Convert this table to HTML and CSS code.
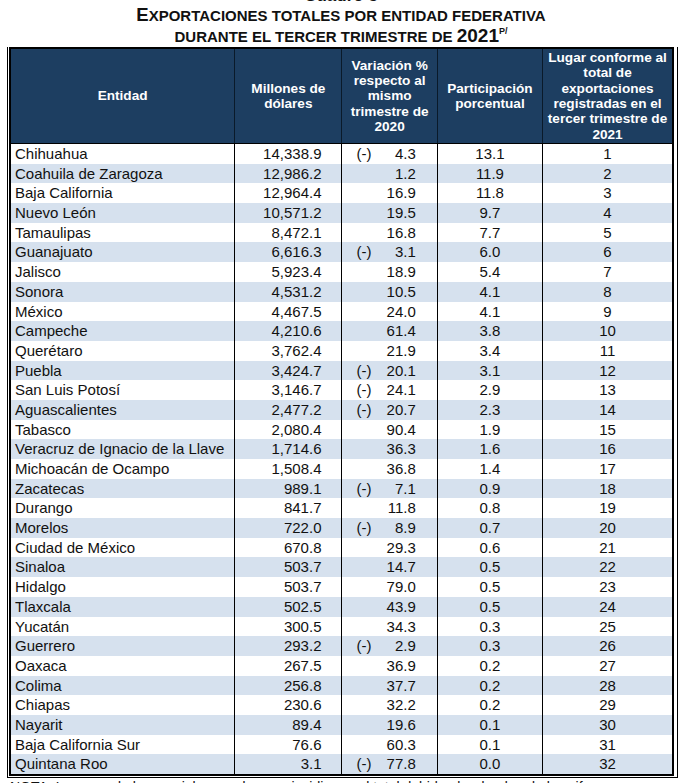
FILE: index.html
```html
<!DOCTYPE html>
<html lang="es">
<head>
<meta charset="utf-8">
<link rel="stylesheet" href="styles.css">
</head>
<body>
<div class="titles">
  <div class="t0">Cuadro 5</div>
  <div class="t1"><span class="big">E</span>XPORTACIONES TOTALES POR ENTIDAD FEDERATIVA</div>
  <div class="t2">DURANTE EL TERCER TRIMESTRE DE <span class="yr">2021</span><sup>P/</sup></div>
</div>
<div class="frame">
<table class="tbl">
  <colgroup>
    <col class="c1"><col class="c2"><col class="c3"><col class="c4"><col class="c5">
  </colgroup>
  <thead>
    <tr>
      <th>Entidad</th>
      <th>Millones de<br>dólares</th>
      <th>Variación %<br>respecto al<br>mismo<br>trimestre de<br>2020</th>
      <th>Participación<br>porcentual</th>
      <th>Lugar conforme al<br>total de<br>exportaciones<br>registradas en el<br>tercer trimestre de<br>2021</th>
    </tr>
  </thead>
  <tbody>
    <tr><td>Chihuahua</td><td class="num">14,338.9</td><td class="var"><span class="neg">(-)</span>4.3</td><td class="ctr">13.1</td><td class="ctr">1</td></tr>
    <tr><td>Coahuila de Zaragoza</td><td class="num">12,986.2</td><td class="var">1.2</td><td class="ctr">11.9</td><td class="ctr">2</td></tr>
    <tr><td>Baja California</td><td class="num">12,964.4</td><td class="var">16.9</td><td class="ctr">11.8</td><td class="ctr">3</td></tr>
    <tr><td>Nuevo León</td><td class="num">10,571.2</td><td class="var">19.5</td><td class="ctr">9.7</td><td class="ctr">4</td></tr>
    <tr><td>Tamaulipas</td><td class="num">8,472.1</td><td class="var">16.8</td><td class="ctr">7.7</td><td class="ctr">5</td></tr>
    <tr><td>Guanajuato</td><td class="num">6,616.3</td><td class="var"><span class="neg">(-)</span>3.1</td><td class="ctr">6.0</td><td class="ctr">6</td></tr>
    <tr><td>Jalisco</td><td class="num">5,923.4</td><td class="var">18.9</td><td class="ctr">5.4</td><td class="ctr">7</td></tr>
    <tr><td>Sonora</td><td class="num">4,531.2</td><td class="var">10.5</td><td class="ctr">4.1</td><td class="ctr">8</td></tr>
    <tr><td>México</td><td class="num">4,467.5</td><td class="var">24.0</td><td class="ctr">4.1</td><td class="ctr">9</td></tr>
    <tr><td>Campeche</td><td class="num">4,210.6</td><td class="var">61.4</td><td class="ctr">3.8</td><td class="ctr">10</td></tr>
    <tr><td>Querétaro</td><td class="num">3,762.4</td><td class="var">21.9</td><td class="ctr">3.4</td><td class="ctr">11</td></tr>
    <tr><td>Puebla</td><td class="num">3,424.7</td><td class="var"><span class="neg">(-)</span>20.1</td><td class="ctr">3.1</td><td class="ctr">12</td></tr>
    <tr><td>San Luis Potosí</td><td class="num">3,146.7</td><td class="var"><span class="neg">(-)</span>24.1</td><td class="ctr">2.9</td><td class="ctr">13</td></tr>
    <tr><td>Aguascalientes</td><td class="num">2,477.2</td><td class="var"><span class="neg">(-)</span>20.7</td><td class="ctr">2.3</td><td class="ctr">14</td></tr>
    <tr><td>Tabasco</td><td class="num">2,080.4</td><td class="var">90.4</td><td class="ctr">1.9</td><td class="ctr">15</td></tr>
    <tr><td>Veracruz de Ignacio de la Llave</td><td class="num">1,714.6</td><td class="var">36.3</td><td class="ctr">1.6</td><td class="ctr">16</td></tr>
    <tr><td>Michoacán de Ocampo</td><td class="num">1,508.4</td><td class="var">36.8</td><td class="ctr">1.4</td><td class="ctr">17</td></tr>
    <tr><td>Zacatecas</td><td class="num">989.1</td><td class="var"><span class="neg">(-)</span>7.1</td><td class="ctr">0.9</td><td class="ctr">18</td></tr>
    <tr><td>Durango</td><td class="num">841.7</td><td class="var">11.8</td><td class="ctr">0.8</td><td class="ctr">19</td></tr>
    <tr><td>Morelos</td><td class="num">722.0</td><td class="var"><span class="neg">(-)</span>8.9</td><td class="ctr">0.7</td><td class="ctr">20</td></tr>
    <tr><td>Ciudad de México</td><td class="num">670.8</td><td class="var">29.3</td><td class="ctr">0.6</td><td class="ctr">21</td></tr>
    <tr><td>Sinaloa</td><td class="num">503.7</td><td class="var">14.7</td><td class="ctr">0.5</td><td class="ctr">22</td></tr>
    <tr><td>Hidalgo</td><td class="num">503.7</td><td class="var">79.0</td><td class="ctr">0.5</td><td class="ctr">23</td></tr>
    <tr><td>Tlaxcala</td><td class="num">502.5</td><td class="var">43.9</td><td class="ctr">0.5</td><td class="ctr">24</td></tr>
    <tr><td>Yucatán</td><td class="num">300.5</td><td class="var">34.3</td><td class="ctr">0.3</td><td class="ctr">25</td></tr>
    <tr><td>Guerrero</td><td class="num">293.2</td><td class="var"><span class="neg">(-)</span>2.9</td><td class="ctr">0.3</td><td class="ctr">26</td></tr>
    <tr><td>Oaxaca</td><td class="num">267.5</td><td class="var">36.9</td><td class="ctr">0.2</td><td class="ctr">27</td></tr>
    <tr><td>Colima</td><td class="num">256.8</td><td class="var">37.7</td><td class="ctr">0.2</td><td class="ctr">28</td></tr>
    <tr><td>Chiapas</td><td class="num">230.6</td><td class="var">32.2</td><td class="ctr">0.2</td><td class="ctr">29</td></tr>
    <tr><td>Nayarit</td><td class="num">89.4</td><td class="var">19.6</td><td class="ctr">0.1</td><td class="ctr">30</td></tr>
    <tr><td>Baja California Sur</td><td class="num">76.6</td><td class="var">60.3</td><td class="ctr">0.1</td><td class="ctr">31</td></tr>
    <tr><td>Quintana Roo</td><td class="num">3.1</td><td class="var"><span class="neg">(-)</span>77.8</td><td class="ctr">0.0</td><td class="ctr">32</td></tr>
  </tbody>
</table>
</div>
<p class="note">NOTA: La suma de los parciales puede no coincidir con el total debido al redondeo de las cifras.</p>
</body>
</html>
```

FILE: styles.css
```css
html, body {
  margin: 0;
  padding: 0;
  background: #ffffff;
}
body {
  font-family: "Liberation Sans", Arial, sans-serif;
  color: #111111;
  width: 682px;
  height: 783px;
  overflow: hidden;
}
.titles {
  text-align: center;
  font-weight: bold;
  color: #111111;
}
.t0 {
  font-size: 17px;
  line-height: 20px;
  margin-top: -14px;
  height: 19px;
}
.t1 {
  font-size: 15px;
  line-height: 20px;
  height: 20px;
}
.t1 .big {
  font-size: 18.5px;
}
.t2 {
  font-size: 15px;
  line-height: 21px;
  height: 21px;
}
.t2 .yr {
  font-size: 19px;
}
.t2 sup {
  font-size: 9px;
  vertical-align: 8px;
  line-height: 0;
}
.frame {
  margin: 1px 0 0 7px;
  width: 667px;
  border-left: 1px solid #000;
  border-right: 1px solid #000;
  border-bottom: 1px solid #000;
  padding: 0 1px 1px 1px;
}
.tbl {
  width: 665px;
  border-collapse: collapse;
  border: 2px solid #000;
  table-layout: fixed;
  font-size: 15px;
}
.c1 { width: 224px; }
.c2 { width: 107px; }
.c3 { width: 95px; }
.c4 { width: 105px; }
.c5 { width: 130px; }
.tbl th {
  background: #1d3e61;
  color: #ffffff;
  font-size: 13.6px;
  line-height: 15.3px;
  font-weight: bold;
  height: 94px;
  padding: 0 1px;
  border-left: 1px solid #0a1a2a;
  border-bottom: 1px solid #000;
  text-align: center;
  vertical-align: middle;
}
.tbl th:first-child {
  border-left: none;
}
.tbl td {
  height: 19.68px;
  padding: 0;
  line-height: 19.68px;
  border-left: 1px solid #000;
  white-space: nowrap;
  overflow: hidden;
}
.tbl td:first-child {
  border-left: none;
  padding-left: 4px;
}
.tbl tbody tr:nth-child(even) td {
  background: #d6e1ee;
}
.num {
  text-align: right;
  padding-right: 20px !important;
}
.var {
  text-align: right;
  padding-right: 21px !important;
  padding-left: 14px !important;
}
.neg {
  float: left;
}
.ctr {
  text-align: center;
}
.note {
  margin: 1px 0 0 10px;
  font-size: 14px;
  line-height: 16px;
  white-space: nowrap;
}
```
